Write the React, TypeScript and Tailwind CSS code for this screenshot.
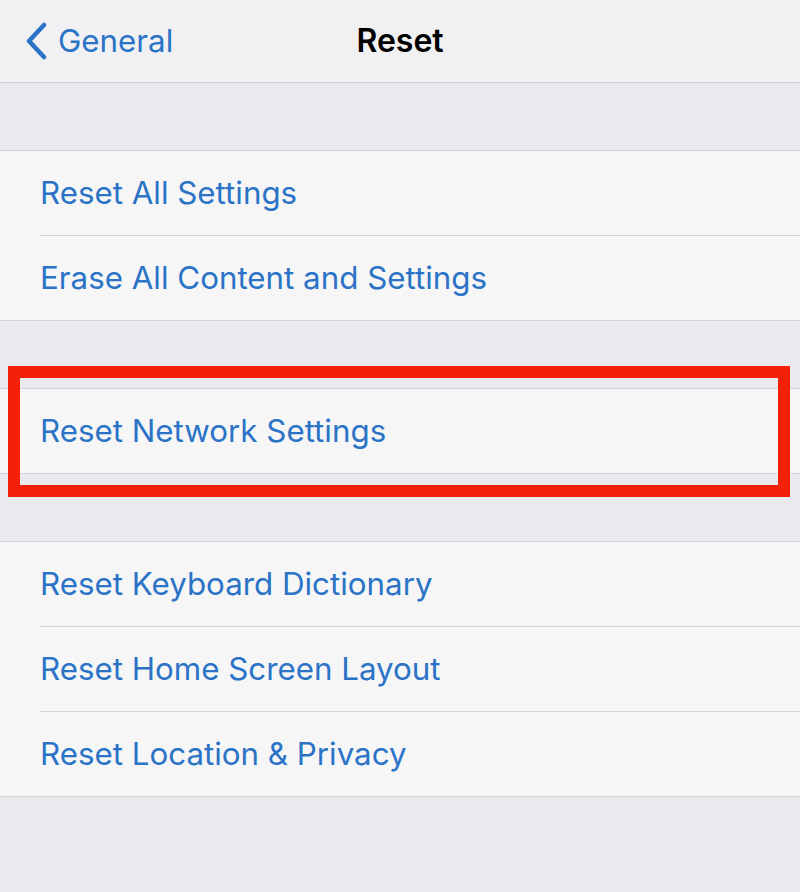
const sections: string[][] = [
  ["Reset All Settings", "Erase All Content and Settings"],
  ["Reset Network Settings"],
  ["Reset Keyboard Dictionary", "Reset Home Screen Layout", "Reset Location & Privacy"],
];

const Row = ({ label, last }: { label: string; last: boolean }) => (
  <div className="pl-[40px]">
    <div
      className={`flex items-center text-[31.3px] text-[#2a73c6] ${
        last ? "h-[84px]" : "h-[85px] border-b border-[#d6d6da]"
      }`}>
      {label}
    </div>
  </div>
);

const App = () => {
  return (
    <div
      className="w-[800px] h-[892px] bg-[#e9e9ee] overflow-hidden"
      style={{ fontFamily: "Inter, 'Noto Sans', sans-serif" }}>
      {/* Nav bar */}
      <div className="relative h-[83px] bg-[#f1f1f3] border-b border-[#cfcfd3] flex items-center">
        <div className="flex items-center pl-[24px] gap-[10px] text-[#2a73c6] text-[31.3px]">
          <svg width="24" height="38" viewBox="0 0 24 38" fill="none">
            <path
              d="M20 3 L5 19 L20 35"
              stroke="#2a73c6"
              strokeWidth="4.5"
              strokeLinecap="round"
              strokeLinejoin="round"
            />
          </svg>
          <span>General</span>
        </div>
        <div className="absolute left-0 right-0 text-center text-[32px] font-semibold text-black pointer-events-none">
          Reset
        </div>
      </div>

      <div className="flex flex-col gap-[67px] pt-[67px]">
        {sections.map((rows, i) => (
          <div key={i} className="relative">
            <div className="bg-[#f6f6f7] border-y border-[#d4d4d8]">
              {rows.map((r, j) => (
                <Row key={r} label={r} last={j === rows.length - 1} />
              ))}
            </div>
            {i === 1 && (
              <div className="absolute left-[8px] right-[10px] top-[-22px] bottom-[-23px] border-[12px] border-[#f42008] pointer-events-none" />
            )}
          </div>
        ))}
      </div>
    </div>
  );
};

export default App;
